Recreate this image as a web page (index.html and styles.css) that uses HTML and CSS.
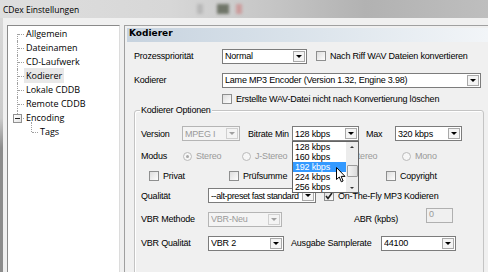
FILE: index.html
```html
<!DOCTYPE html>
<html lang="de">
<head>
    <meta charset="UTF-8">
    <title>CDex Einstellungen</title>
    <link rel="stylesheet" href="styles.css">
</head>
<body>
<div class="window">
    <div class="titlebar">
        <span class="title">CDex Einstellungen</span>
        <span class="glass glass-a"></span>
        <span class="glass glass-b"></span>
        <span class="glass glass-c"></span>
    </div>

    <div class="client">
        <div class="edge"></div>

        <!-- Tree with the settings pages -->
        <div class="tree">
            <ul class="tree-list">
                <li class="first">Allgemein</li>
                <li>Dateinamen</li>
                <li>CD-Laufwerk</li>
                <li><span class="selected">Kodierer</span></li>
                <li>Lokale CDDB</li>
                <li>Remote CDDB</li>
                <li class="last"><span class="expander"></span>Encoding
                    <ul class="sub">
                        <li>Tags</li>
                    </ul>
                </li>
            </ul>
        </div>

        <!-- Encoder page -->
        <div class="page">
            <div class="page-header">Kodierer</div>
            <div class="page-body">
                <div class="row row-prio">
                    <span class="w88">Prozesspriorität</span>
                    <span class="combo w85"><span class="combo-text">Normal</span><span class="drop"></span></span>
                    <span class="check ml9"></span>
                    <span class="ml4">Nach Riff WAV Dateien konvertieren</span>
                </div>
                <div class="row row-enc">
                    <span class="w88">Kodierer</span>
                    <span class="combo w259"><span class="combo-text">Lame MP3 Encoder (Version 1.32, Engine 3.98)</span><span class="drop"></span></span>
                </div>
                <div class="row row-keep">
                    <span class="check ml88"></span>
                    <span class="ml4">Erstellte WAV-Datei nicht nach Konvertierung löschen</span>
                </div>

                <div class="group">
                    <div class="group-title">Kodierer Optionen</div>
                    <div class="group-rows">
                        <div class="row r1">
                            <span class="w41">Version</span>
                            <span class="combo disabled w58"><span class="combo-text">MPEG I</span><span class="drop"></span></span>
                            <span class="w44 ml8">Bitrate Min</span>
                            <span class="combo w67 open"><span class="combo-text">128 kbps</span><span class="drop"></span>
                                <span class="list">
                                    <span class="list-items">
                                        <span class="list-item">128 kbps</span>
                                        <span class="list-item">160 kbps</span>
                                        <span class="list-item hot">192 kbps</span>
                                        <span class="list-item">224 kbps</span>
                                        <span class="list-item">256 kbps</span>
                                    </span>
                                    <span class="list-scroll">
                                        <span class="arrow up"></span>
                                        <span class="thumb"></span>
                                        <span class="arrow down"></span>
                                    </span>
                                    <svg class="cursor" width="11" height="16" viewBox="0 0 11 16">
                                        <path d="M0.5 0.5 L0.5 12.5 L3.3 10 L5.3 14.8 L7.1 14 L5.2 9.4 L9 9.4 Z" fill="#fff" stroke="#000" stroke-width="1" stroke-linejoin="round"/>
                                    </svg>
                                </span>
                            </span>
                            <span class="w29 ml7">Max</span>
                            <span class="combo w67"><span class="combo-text">320 kbps</span><span class="drop"></span></span>
                        </div>
                        <div class="row r2">
                            <span class="w41">Modus</span>
                            <span class="opt w59 ml1 dim"><span class="radio on"></span>Stereo</span>
                            <span class="opt w77 dim"><span class="radio"></span>J-Stereo</span>
                            <span class="opt w83 dim"><span class="radio"></span>Dual Stereo</span>
                            <span class="opt dim"><span class="radio"></span>Mono</span>
                        </div>
                        <div class="row r3">
                            <span class="opt w80 ml8"><span class="check"></span>Privat</span>
                            <span class="opt w157"><span class="check"></span>Prüfsumme</span>
                            <span class="opt"><span class="check"></span>Copyright</span>
                        </div>
                        <div class="row r4">
                            <span class="w67">Qualität</span>
                            <span class="combo w108"><span class="combo-text tight">--alt-preset fast standard</span><span class="drop"></span></span>
                            <span class="opt ml8"><span class="check on">
                                <svg width="8" height="8" viewBox="0 0 8 8"><path d="M1 4 L3 6.5 L7 1" fill="none" stroke="#222" stroke-width="1.6"/></svg>
                            </span>On-The-Fly MP3 Kodieren</span>
                        </div>
                        <div class="row r5">
                            <span class="w67">VBR Methode</span>
                            <span class="combo disabled w74"><span class="combo-text">VBR-Neu</span><span class="drop"></span></span>
                            <span class="w72 ml72">ABR (kpbs)</span>
                            <span class="edit disabled">0</span>
                        </div>
                        <div class="row r6">
                            <span class="w67">VBR Qualität</span>
                            <span class="combo w76"><span class="combo-text">VBR 2</span><span class="drop"></span></span>
                            <span class="w90 ml7">Ausgabe Samplerate</span>
                            <span class="combo w75"><span class="combo-text">44100</span><span class="drop"></span></span>
                        </div>
                    </div>
                </div>
            </div>
        </div>
    </div>
</div>
</body>
</html>
```

FILE: styles.css
```css
* {
    box-sizing: border-box;
}
body {
    margin: 0;
    background: #f0f0f0;
}
.window {
    width: 488px;
    height: 272px;
    overflow: hidden;
    display: flex;
    flex-direction: column;
    background: #f0f0f0;
}
/* Aero title bar */
.titlebar {
    height: 18px;
    flex: none;
    display: flex;
    align-items: center;
    padding-left: 3px;
    background: linear-gradient(to right, #dedede 0%, #d7d7d7 35%, #c6c6c6 55%, #b2b2b2 75%, #bebebe 100%);
    font: 8.5px "Open Sans", sans-serif;
    color: #000;
}
.title {
    width: 79px;
    white-space: nowrap;
}
.glass {
    height: 10px;
    filter: blur(1.5px);
}
.glass-a {
    width: 6px;
    margin-left: 115px;
    background: #b8b8b8;
}
.glass-b {
    width: 12px;
    margin-left: 14px;
    background: #707569;
}
.glass-c {
    width: 6px;
    margin-left: 7px;
    background: #cc9d9d;
}
.client {
    flex: 1;
    display: flex;
    padding-top: 7px;
}
.edge {
    width: 3px;
    margin-top: -7px;
    margin-right: 4px;
    background: linear-gradient(#d8d8d8 0, #cacaca 100px, #8c8c8c 130px, #8c8c8c 100%);
}
/* Tree view */
.tree {
    width: 113px;
    background: #fff;
    border: 1px solid #8a8a8a;
    border-right-color: #dcdcdc;
    border-bottom: none;
    padding-top: 1px;
    font: 9px "Open Sans", sans-serif;
    color: #000;
}
.tree-list,
.tree-list ul {
    list-style: none;
    margin: 0;
    padding: 0;
}
.tree-list li {
    position: relative;
    line-height: 14px;
    padding-left: 18px;
    white-space: nowrap;
}
.tree-list > li::before {
    content: "";
    position: absolute;
    left: 10px;
    top: 7px;
    width: 6px;
    border-top: 1px dotted #a0a0a0;
}
.tree-list > li::after {
    content: "";
    position: absolute;
    left: 9px;
    top: 0;
    height: 14px;
    border-left: 1px dotted #a0a0a0;
}
.tree-list > li.first::after {
    top: 7px;
    height: 7px;
}
.tree-list > li.last::after {
    height: 3px;
}
.tree-list .sub li {
    padding-left: 32px;
    margin-left: -18px;
}
.tree-list .sub li::before {
    content: "";
    position: absolute;
    left: 24px;
    top: 7px;
    width: 6px;
    border-top: 1px dotted #a0a0a0;
}
.tree-list .sub li::after {
    content: "";
    position: absolute;
    left: 23px;
    top: -3px;
    height: 10px;
    border-left: 1px dotted #a0a0a0;
}
.expander {
    position: absolute;
    left: 5px;
    top: 3px;
    width: 9px;
    height: 9px;
    border: 1px solid #919191;
    background: linear-gradient(135deg, #fff, #e4e4e4);
    z-index: 1;
}
.expander::before {
    content: "";
    position: absolute;
    left: 1px;
    top: 3px;
    width: 5px;
    height: 1px;
    background: #222;
}
.selected {
    background: #e8e8e8;
    padding: 1px 2px;
    margin-left: -2px;
}
/* Right page */
.page {
    flex: 1;
    margin-left: 4px;
    border-top: 1px solid #a0a0a0;
    border-left: 1px solid #a0a0a0;
    padding: 2px 0 0 2px;
    font: 9px "Liberation Sans", Arial, sans-serif;
    letter-spacing: -0.2px;
    color: #000;
}
.page-header {
    height: 14px;
    line-height: 14px;
    padding-left: 2px;
    background: linear-gradient(to right, #c7d3df 0%, #d9e2ea 45%, #f2f5f8 100%);
    font: bold 9px "DejaVu Sans", sans-serif;
    letter-spacing: 0;
}
.page-body {
    padding-left: 7px;
}
.row {
    display: flex;
    align-items: center;
    white-space: nowrap;
}
.row-prio { height: 28px; }
.row-enc { height: 20px; }
.row-keep { height: 18px; }
.r1 { height: 23px; }
.r2 { height: 22px; }
.r3 { height: 17px; }
.r4 { height: 23px; }
.r5 { height: 24px; }
.r6 { height: 24px; }

.w29 { width: 29px; }
.w41 { width: 41px; }
.w44 { width: 44px; }
.w58 { width: 58px; }
.w59 { width: 59px; }
.w67 { width: 67px; }
.w72 { width: 72px; }
.w74 { width: 74px; }
.w75 { width: 75px; }
.w76 { width: 76px; }
.w77 { width: 77px; }
.w80 { width: 80px; }
.w83 { width: 83px; }
.w85 { width: 85px; }
.w88 { width: 88px; }
.w90 { width: 90px; }
.w108 { width: 108px; }
.w157 { width: 157px; }
.w259 { width: 259px; }
.ml1 { margin-left: 1px; }
.ml4 { margin-left: 4px; }
.ml7 { margin-left: 7px; }
.ml8 { margin-left: 8px; }
.ml9 { margin-left: 9px; }
.ml72 { margin-left: 72px; }
.ml88 { margin-left: 88px; }

/* Combo boxes */
.combo {
    position: relative;
    flex: none;
    height: 15px;
    display: flex;
    align-items: center;
    padding-left: 2px;
    background: #fff;
    border: 1px solid #7c7c7c;
}
.combo-text {
    flex: 1;
    overflow: hidden;
}
.combo-text.tight {
    letter-spacing: -0.4px;
}
.drop {
    width: 12px;
    height: 11px;
    margin-right: 1px;
    display: flex;
    align-items: center;
    justify-content: center;
    border: 1px solid #a9a9a9;
    background: #f4f4f4;
}
.drop::after {
    content: "";
    border-left: 3px solid transparent;
    border-right: 3px solid transparent;
    border-top: 3px solid #000;
}
.combo.disabled {
    background: #f4f4f4;
    border-color: #b5b5b5;
    color: #9a9a9a;
}
.combo.disabled .drop {
    border-color: #d0d0d0;
}
.combo.disabled .drop::after {
    border-top-color: #a0a0a0;
}
.edit {
    width: 27px;
    height: 15px;
    margin-top: -8px;
    padding: 1px 0 0 2px;
    line-height: 9px;
    border: 1px solid #b0b0b0;
    background: #f0f0f0;
    color: #9a9a9a;
}
/* Check boxes and radios */
.check {
    flex: none;
    width: 10px;
    height: 10px;
    display: inline-flex;
    align-items: center;
    justify-content: center;
    border: 1px solid #8e8f8f;
    background: linear-gradient(135deg, #dedede, #fdfdfd);
}
.opt {
    display: flex;
    align-items: center;
}
.opt .check {
    margin-right: 4px;
}
.radio {
    flex: none;
    width: 9px;
    height: 9px;
    margin-right: 4px;
    border-radius: 50%;
    border: 1px solid #bababa;
    background: #f6f6f6;
    display: inline-flex;
    align-items: center;
    justify-content: center;
}
.radio.on::after {
    content: "";
    width: 3px;
    height: 3px;
    border-radius: 50%;
    background: #a8a8a8;
}
.dim {
    color: #9a9a9a;
}
/* Group box */
.group {
    margin-top: 2px;
    width: 350px;
    height: 170px;
    padding-left: 6px;
    border: 1px solid #c4c4c4;
    border-radius: 3px;
    box-shadow: inset 1px 1px 0 #fff;
}
.group-title {
    width: max-content;
    height: 12px;
    line-height: 12px;
    margin: -7px 0 0 -1px;
    padding: 0 1px;
    background: #f0f0f0;
}
.group-rows {
    margin-top: 6px;
}
/* Open drop-down list */
.list {
    position: absolute;
    left: -1px;
    top: 14px;
    width: 67px;
    height: 52px;
    display: flex;
    background: #fff;
    border: 1px solid #646464;
    z-index: 2;
}
.list-items {
    flex: 1;
    display: flex;
    flex-direction: column;
}
.list-item {
    height: 10px;
    line-height: 10px;
    padding-left: 2px;
}
.list-item.hot {
    background: #3399ff;
    color: #fff;
}
.list-scroll {
    width: 12px;
    display: flex;
    flex-direction: column;
    align-items: center;
    background: #ececec;
}
.arrow {
    width: 12px;
    height: 9px;
    display: flex;
    align-items: center;
    justify-content: center;
}
.arrow.up::after {
    content: "";
    border-left: 2px solid transparent;
    border-right: 2px solid transparent;
    border-bottom: 2px solid #333;
}
.arrow.down {
    margin-top: auto;
}
.arrow.down::after {
    content: "";
    border-left: 2px solid transparent;
    border-right: 2px solid transparent;
    border-top: 2px solid #333;
}
.thumb {
    width: 11px;
    height: 12px;
    margin-top: 14px;
    border: 1px solid #9c9c9c;
    border-radius: 1px;
    background: linear-gradient(to right, #f4f4f4, #dcdcdc);
}
.cursor {
    position: absolute;
    left: 43px;
    top: 25px;
}
```
